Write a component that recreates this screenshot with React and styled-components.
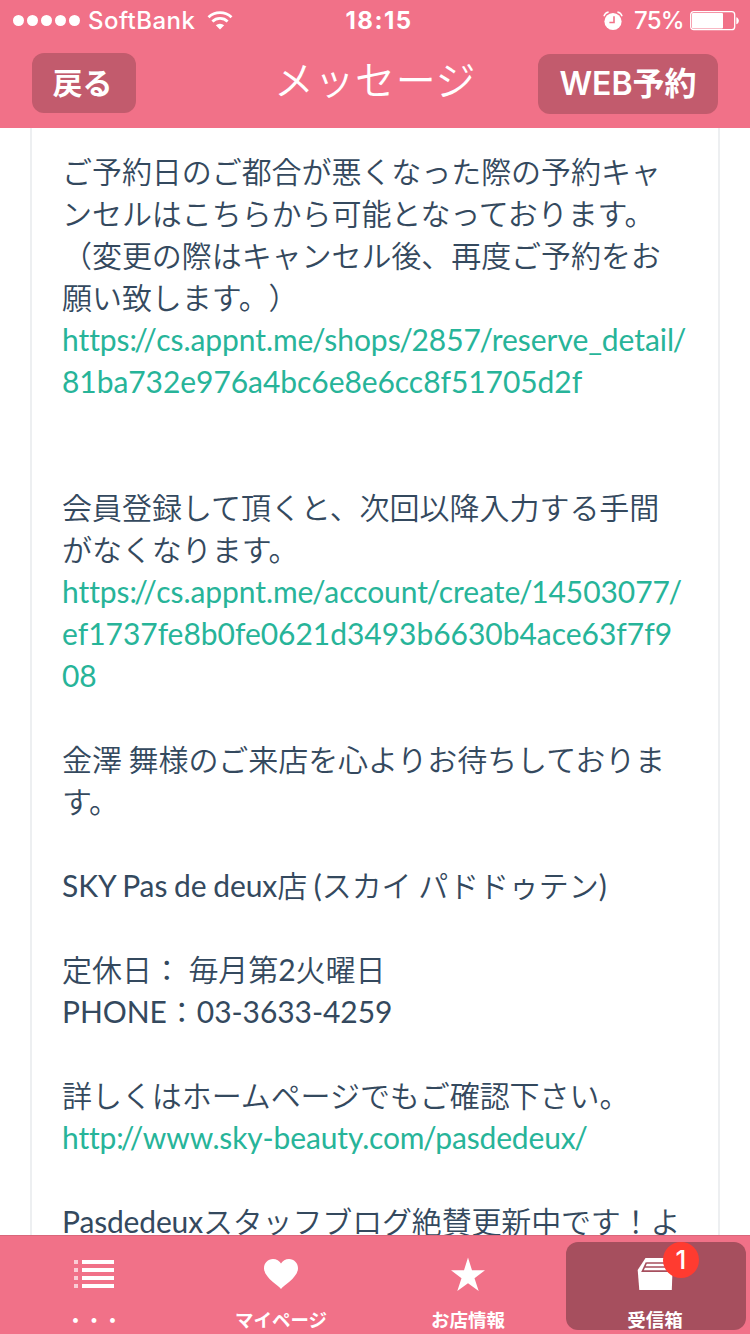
import React from 'react';
import styled, { createGlobalStyle } from 'styled-components';

const lines = [
    { text: 'ご予約日のご都合が悪くなった際の予約キャ' },
    { text: 'ンセルはこちらから可能となっております。' },
    { text: '（変更の際はキャンセル後、再度ご予約をお' },
    { text: '願い致します。）' },
    { text: 'https://cs.appnt.me/shops/2857/reserve_detail/', link: true },
    { text: '81ba732e976a4bc6e8e6cc8f51705d2f', link: true },
    { text: '' },
    { text: '' },
    { text: '会員登録して頂くと、次回以降入力する手間', spacing: -0.03 },
    { text: 'がなくなります。' },
    { text: 'https://cs.appnt.me/account/create/14503077/', link: true },
    { text: 'ef1737fe8b0fe0621d3493b6630b4ace63f7f9', link: true, spacing: -0.03 },
    { text: '08', link: true },
    { text: '' },
    { text: '金澤 舞様のご来店を心よりお待ちしておりま' },
    { text: 'す。' },
    { text: '' },
    { text: 'SKY Pas de deux店 (スカイ パドドゥテン)' },
    { text: '' },
    { text: '定休日： 毎月第2火曜日' },
    { text: 'PHONE：03-3633-4259' },
    { text: '' },
    { text: '詳しくはホームページでもご確認下さい。' },
    { text: 'http://www.sky-beauty.com/pasdedeux/', link: true, spacing: -0.15 },
    { text: '' },
    { text: 'Pasdedeuxスタッフブログ絶賛更新中です！よ', spacing: -0.16 },
];

const WifiIcon = () => (
    <svg width="26" height="20" viewBox="0 0 26 20" fill="none" stroke="#fff">
        <path d="M1.5 6.2a16.8 16.8 0 0 1 23 0" strokeWidth="2.8" />
        <path d="M5.4 10.5a11 11 0 0 1 15.2 0" strokeWidth="2.8" />
        <path d="M13 18.6l-4.2-4.3a6.2 6.2 0 0 1 8.4 0z" fill="#fff" stroke="none" />
    </svg>
);

const AlarmIcon = () => (
    <svg width="20" height="20" viewBox="0 0 20 20">
        <circle cx="10" cy="10.5" r="8.6" fill="#fff" />
        <path d="M.9 5.2A6 6 0 0 1 5.6 1M19.1 5.2A6 6 0 0 0 14.4 1" fill="none" stroke="#fff" strokeWidth="1.4" />
        <path d="M11 5.2v6.3H6.4" fill="none" stroke="#f27188" strokeWidth="1.6" />
    </svg>
);

const BatteryIcon = () => (
    <svg width="50" height="20" viewBox="0 0 50 20">
        <rect x=".7" y=".7" width="44" height="18" rx="3" fill="none" stroke="#fff" strokeWidth="1.3" />
        <rect x="2" y="2" width="31" height="15.4" rx="1" fill="#fff" />
        <path d="M46.3 6.2c3.4 1 3.4 6 0 7z" fill="#fff" />
    </svg>
);

const ListIcon = () => (
    <svg width="40" height="36" viewBox="0 0 40 36" fill="#fff">
        {[4, 12, 20, 28].map((y) => (
            <React.Fragment key={y}>
                <rect x="0" y={y} width="4" height="4" opacity=".65" />
                <rect x="8" y={y} width="32" height="4" />
            </React.Fragment>
        ))}
    </svg>
);

const HeartIcon = () => (
    <svg width="36" height="36" viewBox="0 0 36 36" fill="#fff">
        <path d="M18 33C15.5 29.5 1 21.5 1 12.2 1 7 5 3 10 3c3.4 0 6.5 1.8 8 4.5C19.5 4.8 22.6 3 26 3c5 0 9 4 9 9.2C35 21.5 20.5 29.5 18 33z" />
    </svg>
);

const StarIcon = () => (
    <svg width="36" height="36" viewBox="0 0 36 36" fill="#fff">
        <path d="M18 1.5l4 12.7h13l-10.5 8 4.2 12.8L18 27.2 7.3 35l4.2-12.8L1 14.2h13z" />
    </svg>
);

const InboxIcon = () => (
    <svg width="36" height="36" viewBox="0 0 36 36">
        <path d="M8.5 2h19l8 12-.7 20H2.3L.7 14z" fill="#fff" />
        <path d="M9.7 7h22M8 11h24M9.5 6.5L5.5 15.2h26" stroke="#a64f5e" strokeWidth="1.7" fill="none" />
    </svg>
);

const tabs = [
    { label: '・・・', icon: <ListIcon /> },
    { label: 'マイページ', icon: <HeartIcon /> },
    { label: 'お店情報', icon: <StarIcon /> },
    { label: '受信箱', icon: <InboxIcon />, active: true, badge: 1 },
];

// slashes are kerned separately from the rest of the address
const renderUrl = (url) => url.split(/(\/+)/).map((part, index) => {
    if (part === '//') return <DoubleSlash key={index}>{part}</DoubleSlash>;
    if (part === '/') return <Slash key={index}>{part}</Slash>;
    return part;
});

const App = () => {
    return (
        <Screen>
            <GlobalStyle />
            <Header>
                <StatusBar>
                    <Carrier>
                        <Signal>
                            {[0, 1, 2, 3, 4].map((dot) => <Dot key={dot} />)}
                        </Signal>
                        <span>SoftBank</span>
                        <WifiIcon />
                    </Carrier>
                    <Clock>18:15</Clock>
                    <Power>
                        <AlarmIcon />
                        <span>75%</span>
                        <BatteryIcon />
                    </Power>
                </StatusBar>
                <NavBar>
                    <NavButton $width={104} $size={30}>戻る</NavButton>
                    <Title>メッセージ</Title>
                    <NavButton $width={180} $size={32}>WEB予約</NavButton>
                </NavBar>
            </Header>
            <Main>
                <Card>
                    {lines.map((line, index) => (
                        line.link
                            ? <LinkLine key={index} $spacing={line.spacing}>{renderUrl(line.text)}</LinkLine>
                            : <Line key={index} $spacing={line.spacing}>{line.text}</Line>
                    ))}
                </Card>
            </Main>
            <TabBar>
                {tabs.map((tab) => (
                    <Tab key={tab.label} $active={tab.active}>
                        <IconBox>
                            {tab.icon}
                            {tab.badge && <Badge>{tab.badge}</Badge>}
                        </IconBox>
                        <TabLabel>{tab.label}</TabLabel>
                    </Tab>
                ))}
            </TabBar>
        </Screen>
    );
};

const GlobalStyle = createGlobalStyle`
    * {
        box-sizing: border-box;
    }

    body {
        margin: 0;
        background: #fff;
    }
`;

const Screen = styled.div`
    display: flex;
    flex-direction: column;
    width: 750px;
    height: 1334px;
    overflow: hidden;
    font-family: Inter, 'Noto Sans CJK JP', sans-serif;
`;

const Header = styled.header`
    flex: none;
    height: 128px;
    color: #fff;
    background: #f17188;
`;

const StatusBar = styled.div`
    display: grid;
    grid-template-columns: 1fr auto 1fr;
    align-items: center;
    height: 40px;
    padding: 0 10px 0 13px;
    font-size: 24px;
    line-height: 40px;
`;

const Carrier = styled.div`
    display: flex;
    align-items: center;
    font-weight: 500;
    letter-spacing: 0.45px;

    span {
        padding-top: 1px;
    }

    svg {
        margin-left: 12px;
    }
`;

const Signal = styled.div`
    display: flex;
    gap: 3px;
    margin-right: 8px;
`;

const Dot = styled.i`
    width: 11px;
    height: 11px;
    border-radius: 50%;
    background: #fff;
`;

const Clock = styled.span`
    padding: 1px 0 0 5px;
    font-weight: 700;
    letter-spacing: 1.5px;
`;

const Power = styled.div`
    display: flex;
    align-items: center;
    justify-content: flex-end;
    font-weight: 500;

    span {
        margin: 0 6px 0 11px;
        padding-top: 1px;
        letter-spacing: -0.7px;
    }
`;

const NavBar = styled.div`
    display: grid;
    grid-template-columns: 1fr auto 1fr;
    align-items: center;
    height: 88px;
    padding: 0 32px;
`;

const NavButton = styled.button`
    width: ${({ $width }) => $width}px;
    height: 60px;
    padding: 0;
    border: 0;
    border-radius: 12px;
    color: #fff;
    background: #c25b6d;
    font: 600 ${({ $size }) => $size}px/60px Inter, 'Noto Sans CJK JP', sans-serif;

    &:first-child {
        margin-top: -2px;
        padding-right: 3px;
    }

    &:last-child {
        justify-self: end;
    }
`;

const Title = styled.h1`
    margin: -12px 0 0;
    font-family: 'Noto Sans CJK JP DemiLight', 'Noto Sans CJK JP', sans-serif;
    font-size: 40px;
    font-weight: 350;
    letter-spacing: 0.6px;
    line-height: 60px;
`;

const Main = styled.main`
    flex: 1;
    min-height: 0;
    padding: 0 30px;
    overflow: hidden;
`;

const Card = styled.article`
    padding: 22px 30px 0;
    border: solid #edeff1;
    border-width: 0 2px;
`;

const Line = styled.p`
    display: block;
    height: 42px;
    margin: 0;
    color: #34495e;
    font-family: Lato, 'Noto Sans CJK JP DemiLight', 'Noto Sans CJK JP', sans-serif;
    font-size: 30px;
    font-weight: 400;
    font-variant-ligatures: none;
    letter-spacing: ${({ $spacing = -0.06 }) => $spacing}px;
    line-height: 42px;
    word-spacing: -1px;
    white-space: pre;
    text-spacing-trim: space-all;
`;

const LinkLine = styled(Line).attrs({ as: 'a' })`
    color: #27b499;
`;

const Slash = styled.span`
    margin: 0 -1.3px;
`;

const DoubleSlash = styled.span`
    margin: 0 -2.8px;
    letter-spacing: 2.2px;
`;

const TabBar = styled.nav`
    display: grid;
    grid-template-columns: repeat(4, 180px);
    gap: 7px;
    flex: none;
    height: 99px;
    padding: 6px 4px 4px 5px;
    border-top: 1px solid #d9667b;
    color: #fff;
    background: #f17188;
`;

const Tab = styled.div`
    display: flex;
    flex-direction: column;
    align-items: center;
    height: 88px;
    padding: 14px 2px 0 0;
    border-radius: 12px;
    background: ${({ $active }) => ($active ? '#a64f5e' : 'transparent')};
`;

const IconBox = styled.div`
    position: relative;
    height: 36px;
`;

const Badge = styled.span`
    position: absolute;
    top: -14px;
    left: 26px;
    width: 36px;
    height: 36px;
    border-radius: 50%;
    background: #ff3b30;
    font-size: 26px;
    font-weight: 500;
    line-height: 36px;
    text-align: center;
`;

const TabLabel = styled.span`
    margin-top: 14px;
    font-size: 18.5px;
    font-weight: 600;
    line-height: 28px;
`;

export default App;
